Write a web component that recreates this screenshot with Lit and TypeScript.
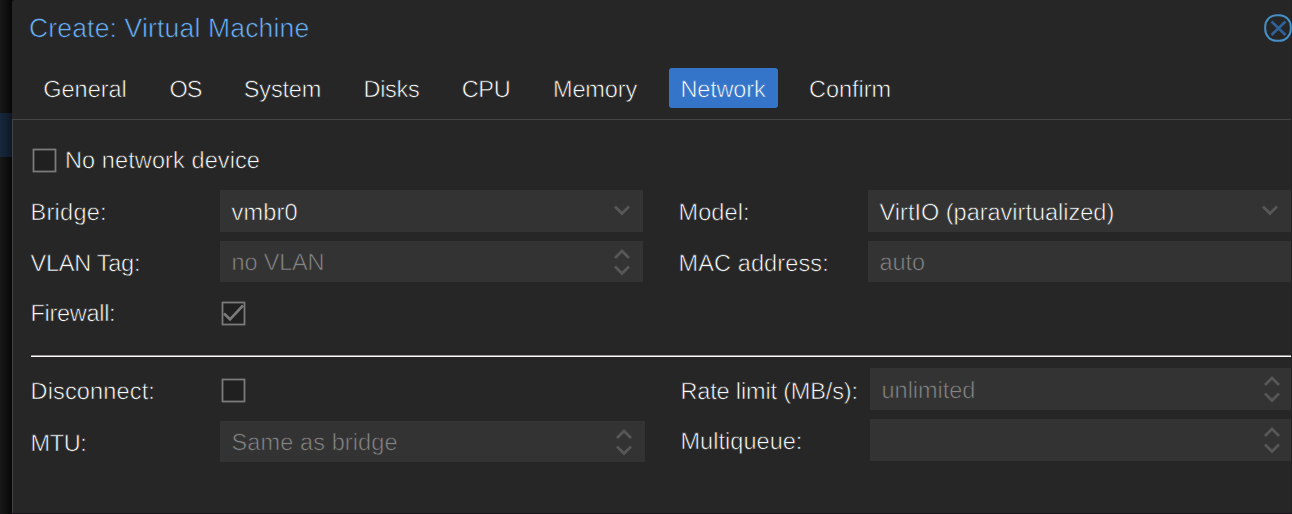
import { LitElement, html, css, svg, nothing } from 'lit';

type Control = 'combo' | 'spinner' | 'text' | 'check' | 'checked';

interface Field {
  label: string;
  spacing: number;
  control: Control;
  value?: string;
  placeholder?: string;
  valueSpacing?: number;
}

const TABS: { name: string; spacing: number }[] = [
  { name: 'General', spacing: -0.05 },
  { name: 'OS', spacing: -1 },
  { name: 'System', spacing: -0.16 },
  { name: 'Disks', spacing: -0.3 },
  { name: 'CPU', spacing: -0.4 },
  { name: 'Memory', spacing: -0.15 },
  { name: 'Network', spacing: -0.15 },
  { name: 'Confirm', spacing: -0.05 },
];

const BASIC_LEFT: Field[] = [
  { label: 'Bridge:', spacing: 0.28, control: 'combo', value: 'vmbr0', valueSpacing: 0.2 },
  { label: 'VLAN Tag:', spacing: -0.25, control: 'spinner', placeholder: 'no VLAN', valueSpacing: -0.2 },
  { label: 'Firewall:', spacing: -0.3, control: 'checked' },
];
const BASIC_RIGHT: Field[] = [
  { label: 'Model:', spacing: 0.1, control: 'combo', value: 'VirtIO (paravirtualized)', valueSpacing: 0 },
  { label: 'MAC address:', spacing: 0.12, control: 'text', placeholder: 'auto', valueSpacing: -0.1 },
];
const ADV_LEFT: Field[] = [
  { label: 'Disconnect:', spacing: 0.16, control: 'check' },
  { label: 'MTU:', spacing: -0.35, control: 'spinner', placeholder: 'Same as bridge', valueSpacing: 0.1 },
];
const ADV_RIGHT: Field[] = [
  { label: 'Rate limit (MB/s):', spacing: -0.16, control: 'spinner', placeholder: 'unlimited', valueSpacing: -0.05 },
  { label: 'Multiqueue:', spacing: 0.04, control: 'spinner' },
];

const text = (value: string, spacing = 0) =>
  html`<span class="text" style="letter-spacing:${spacing}px">${value}</span>`;

const checkbox = (checked: boolean) => html`
  <svg class="box" width="26" height="26" viewBox="0 0 26 26">
    <rect x="2.5" y="2.5" width="22" height="22" fill="#202020" stroke="#7b7b7b" stroke-width="1.8" />
    ${checked ? svg`<path d="M4 13.5 L10 19.3 L23 5.5" fill="none" stroke="#7b7b7b" stroke-width="2.6" />` : nothing}
  </svg>`;

const trigger = (control: Control) =>
  control === 'combo'
    ? html`<svg class="trigger" width="16" height="32" viewBox="0 0 16 32">
        <path d="M1 11.5 L8 18.5 L15 11.5" />
      </svg>`
    : control === 'spinner'
      ? html`<svg class="trigger" width="16" height="32" viewBox="0 0 16 32">
          <path d="M1 12 L8 5 L15 12 M1 20.5 L8 27.5 L15 20.5" />
        </svg>`
      : nothing;

class AppRoot extends LitElement {
  static styles = css`
    :host {
      display: grid;
      grid-template-columns: 12px 1fr;
      height: 514px;
      overflow: hidden;
      background: #111;
      color: #fff;
      font: 23.5px/26px "Liberation Sans", Arial, sans-serif;
      text-rendering: geometricPrecision;
    }
    * { box-sizing: border-box; }
    .backdrop {
      display: grid;
      grid-template-rows: 113px 44px 1fr;
      background: linear-gradient(90deg, #181818, #070707);
    }
    .backdrop .selected { background: linear-gradient(90deg, #17283d, #0e1826); }
    .panel {
      --bg: #262626;
      display: flex;
      flex-direction: column;
      background: var(--bg);
      border-radius: 3px 0 0 0;
      border-right: 1px solid #222;
      border-bottom: 1px solid #19141a;
    }
    .text {
      white-space: pre;
      -webkit-text-stroke: 0.6px var(--bg);
    }
    header {
      display: flex;
      align-items: center;
      justify-content: space-between;
      height: 56px;
      padding-left: 17px;
      font-size: 26.5px;
      color: #68b2fb;
    }
    .close { margin-right: -1px; flex: none; }
    nav {
      display: grid;
      grid-template-columns: 107px 56px 100px 80px 71px 109px 109px 107px;
      column-gap: 19px;
      height: 64px;
      padding: 12px 0 0 20px;
      border-bottom: 1px solid #444;
    }
    .tab {
      display: flex;
      align-items: center;
      justify-content: center;
      height: 40px;
      padding: 2px 1px 0 0;
      border-radius: 3px;
    }
    .tab.active { --bg: #3475c9; background: var(--bg); }
    main {
      flex: 1;
      padding: 20px 0 0 18px;
      border-left: 1px solid #444;
    }
    .toggle {
      display: flex;
      align-items: center;
      gap: 8px;
      height: 40px;
      margin-bottom: 10px;
    }
    .columns { display: grid; grid-template-columns: 612px 612px; column-gap: 36px; }
    .columns.advanced { grid-template-columns: 614px 610px; }
    .column { display: grid; gap: 9px; align-content: start; grid-auto-rows: 42px; }
    .basic .column { grid-template-rows: 42px 41px 43px; }
    .advanced .column:first-child { grid-template-rows: 44px 41px; }
    .row { display: grid; grid-template-columns: 189px 1fr; align-items: stretch; }
    .label { display: flex; align-items: center; padding-top: 2px; margin-left: -0.5px; }
    .basic .row:last-child .box + .label, .basic .row:nth-child(3) .label { padding-top: 0; }
    .advanced .column:last-child .row:first-child .label { padding-top: 4px; }
    .row .box { align-self: center; }
    .input {
      --bg: #333;
      display: flex;
      align-items: center;
      justify-content: space-between;
      padding: 0 13px 0 11.6px;
      background: var(--bg);
    }
    .input.combo { padding-top: 2px; }
    .input.combo .trigger { margin-top: -2px; }
    .advanced .column:last-child .input { padding-right: 11px; }
    .advanced .column:last-child .input .text { padding-top: 2px; }
    .empty { color: #868686; }
    .trigger { margin-left: auto; fill: none; stroke: #575757; stroke-width: 2.8; }
    hr { height: 2px; margin: 21px 0 11px; border: 0; background: linear-gradient(#9a9597 50%, #fff 50%); }
  `;

  row(f: Field) {
    const isCheck = f.control === 'check' || f.control === 'checked';
    return html`<div class="row">
      <label class="label">${text(f.label, f.spacing)}</label>
      ${isCheck
        ? checkbox(f.control === 'checked')
        : html`<div class="input ${f.control} ${f.placeholder ? 'empty' : ''}">
            ${f.value || f.placeholder ? text(f.value ?? f.placeholder ?? '', f.valueSpacing) : nothing}
            ${trigger(f.control)}
          </div>`}
    </div>`;
  }

  columns(kind: string, left: Field[], right: Field[]) {
    return html`<section class="columns ${kind}">
      <div class="column">${left.map((f) => this.row(f))}</div>
      <div class="column">${right.map((f) => this.row(f))}</div>
    </section>`;
  }

  render() {
    return html`
      <div class="backdrop"><i></i><i class="selected"></i></div>
      <div class="panel">
        <header>
          ${text('Create: Virtual Machine', 0.17)}
          <svg class="close" width="28" height="28" viewBox="0 0 28 28" fill="none">
            <rect x="1.2" y="1.2" width="25.6" height="25.6" rx="11.5" stroke="#468fc6" stroke-width="2" />
            <path d="M7.5 7.5 L21.5 21 M21.5 7.5 L7.5 21" stroke="#2f629b" stroke-width="2.6" />
          </svg>
        </header>
        <nav>
          ${TABS.map((t) => html`<div class="tab ${t.name === 'Network' ? 'active' : ''}">${text(t.name, t.spacing)}</div>`)}
        </nav>
        <main>
          <div class="toggle">${checkbox(false)}${text('No network device', 0.1)}</div>
          ${this.columns('basic', BASIC_LEFT, BASIC_RIGHT)}
          <hr />
          ${this.columns('advanced', ADV_LEFT, ADV_RIGHT)}
        </main>
      </div>`;
  }
}

customElements.define('app-root', AppRoot);
